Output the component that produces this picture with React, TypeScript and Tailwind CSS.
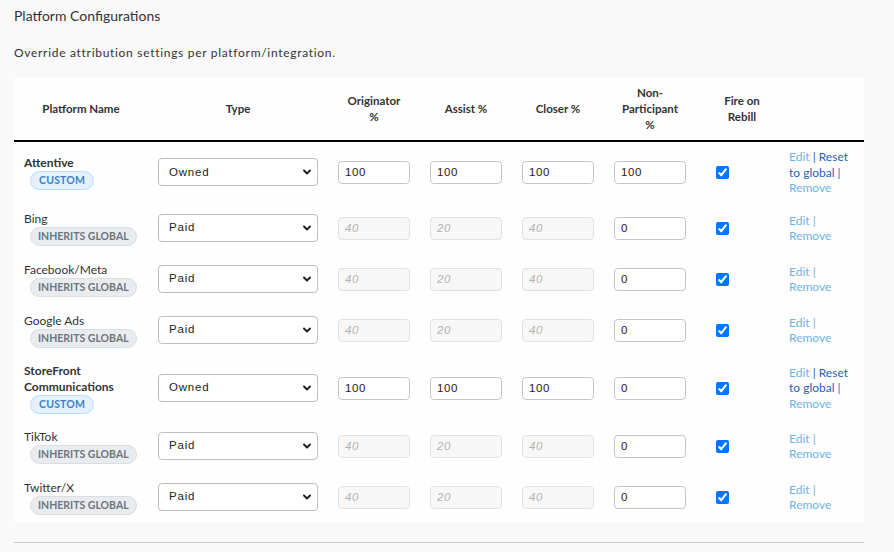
import { ChevronDown } from 'lucide-react';

type Row = {
  name: string;
  custom: boolean;
  type: string;
  originator: string;
  assist: string;
  closer: string;
  nonParticipant: string;
};

const rows: Row[] = [
  { name: 'Attentive', custom: true, type: 'Owned', originator: '100', assist: '100', closer: '100', nonParticipant: '100' },
  { name: 'Bing', custom: false, type: 'Paid', originator: '40', assist: '20', closer: '40', nonParticipant: '0' },
  { name: 'Facebook/Meta', custom: false, type: 'Paid', originator: '40', assist: '20', closer: '40', nonParticipant: '0' },
  { name: 'Google Ads', custom: false, type: 'Paid', originator: '40', assist: '20', closer: '40', nonParticipant: '0' },
  { name: 'StoreFront Communications', custom: true, type: 'Owned', originator: '100', assist: '100', closer: '100', nonParticipant: '0' },
  { name: 'TikTok', custom: false, type: 'Paid', originator: '40', assist: '20', closer: '40', nonParticipant: '0' },
  { name: 'Twitter/X', custom: false, type: 'Paid', originator: '40', assist: '20', closer: '40', nonParticipant: '0' },
];

function PctInput({ value, custom }: { value: string; custom: boolean }) {
  if (custom) {
    return (
      <input
        defaultValue={value}
        className="block h-[23px] w-full rounded-[4px] border border-[#c6c6c6] bg-white px-[6px] font-['Liberation_Sans',Arial,sans-serif] text-[11.5px] tracking-[0.6px] text-[#222] outline-none"
      />
    );
  }
  return (
    <input
      disabled
      placeholder={value}
      className="block h-[23px] w-full rounded-[4px] border border-[#e1e1e1] bg-[#f7f7f7] px-[6px] font-['Liberation_Sans',Arial,sans-serif] text-[11.5px] tracking-[0.6px] placeholder:italic placeholder:text-[#b3b3b3] outline-none"
    />
  );
}

export default function App() {
  return (
    <div className="min-h-screen bg-[#f9f9f9] font-['Lato',sans-serif] text-[#333]">
      <div className="px-[14px] pt-[6px]">
        <h3 className="text-[14px] leading-[20px]">Platform Configurations</h3>
        <p className="mt-[19px] text-[12px] leading-[16px] tracking-[0.7px]">
          Override attribution settings per platform/integration.
        </p>

        <table className="mt-[16px] w-[850px] table-fixed border-collapse bg-[#fefefe]">
          <colgroup>
            <col className="w-[134px]" />
            <col className="w-[180px]" />
            <col className="w-[92px]" />
            <col className="w-[92px]" />
            <col className="w-[92px]" />
            <col className="w-[92px]" />
            <col className="w-[92px]" />
            <col className="w-[76px]" />
          </colgroup>
          <thead>
            <tr className="border-b-2 border-black text-[11.5px] font-bold leading-[16px] text-[#333]">
              <th className="h-[64px] px-[8px] text-center align-middle font-bold">Platform Name</th>
              <th className="px-[8px] text-center align-middle font-bold">Type</th>
              {['Originator %', 'Assist %', 'Closer %', 'Non-Participant %', 'Fire on Rebill'].map(h => (
                <th key={h} className="px-[8px] text-center align-middle font-bold">
                  <div className="mx-auto w-[60px]">{h}</div>
                </th>
              ))}
              <th />
            </tr>
          </thead>
          <tbody>
            {rows.map(row => {
              // custom rows are a touch tighter than the inherited ones
              const py = row.custom ? 'py-[7px]' : 'py-[8px]';
              return (
                <tr key={row.name}>
                  <td className={`px-[10px] ${py} align-middle`}>
                    <div className={`text-[12px] leading-[16px] ${row.custom ? 'font-bold' : ''}`}>{row.name}</div>
                    {row.custom ? (
                      <div className="ml-[6px] w-fit whitespace-nowrap rounded-full border border-[#bcdcf8] bg-[#e4f1fd] px-[8px] text-[10.5px] font-bold leading-[17px] tracking-[0.2px] text-[#3b82c6]">
                        CUSTOM
                      </div>
                    ) : (
                      <div className="ml-[6px] w-fit whitespace-nowrap rounded-full border border-[#dadde1] bg-[#e9ecef] px-[7px] text-[10.5px] font-bold leading-[17px] text-[#6c757d]">
                        INHERITS GLOBAL
                      </div>
                    )}
                  </td>
                  <td className={`px-[10px] ${py} align-middle`}>
                    <div className="relative">
                      <select
                        defaultValue={row.type}
                        className="block h-[28px] w-full appearance-none rounded-[4px] border border-[#bdbdbd] bg-white pl-[10px] font-['Liberation_Sans',Arial,sans-serif] text-[11.5px] tracking-[0.8px] text-[#222] outline-none"
                      >
                        <option>Owned</option>
                        <option>Paid</option>
                      </select>
                      <ChevronDown
                        size={12}
                        strokeWidth={4}
                        className="pointer-events-none absolute right-[5px] top-[8px] text-[#222]"
                      />
                    </div>
                  </td>
                  <td className={`px-[10px] ${py} align-middle`}>
                    <PctInput value={row.originator} custom={row.custom} />
                  </td>
                  <td className={`px-[10px] ${py} align-middle`}>
                    <PctInput value={row.assist} custom={row.custom} />
                  </td>
                  <td className={`px-[10px] ${py} align-middle`}>
                    <PctInput value={row.closer} custom={row.custom} />
                  </td>
                  <td className={`px-[10px] ${py} align-middle`}>
                    <input
                      defaultValue={row.nonParticipant}
                      className="block h-[23px] w-full rounded-[4px] border border-[#c6c6c6] bg-white px-[6px] font-['Liberation_Sans',Arial,sans-serif] text-[11.5px] tracking-[0.6px] text-[#222] outline-none"
                    />
                  </td>
                  <td className={`pl-[20px] ${py} align-middle`}>
                    <input type="checkbox" defaultChecked className="block h-[13px] w-[13px]" />
                  </td>
                  <td className={`pl-[1px] pr-[10px] ${py} align-middle text-[12px] leading-[15.5px]`}>
                    {row.custom ? (
                      <>
                        <a className="text-[#6db3e8]">Edit</a>
                        <span className="text-[#2b5fb4]"> | Reset to global | </span>
                        <a className="text-[#6db3e8]">Remove</a>
                      </>
                    ) : (
                      <>
                        <a className="text-[#6db3e8]">Edit | </a>
                        <a className="text-[#6db3e8]">Remove</a>
                      </>
                    )}
                  </td>
                </tr>
              );
            })}
          </tbody>
        </table>

        <div className="mt-[19px] w-[850px] border-t border-[#cccccc]" />
      </div>
    </div>
  );
}
